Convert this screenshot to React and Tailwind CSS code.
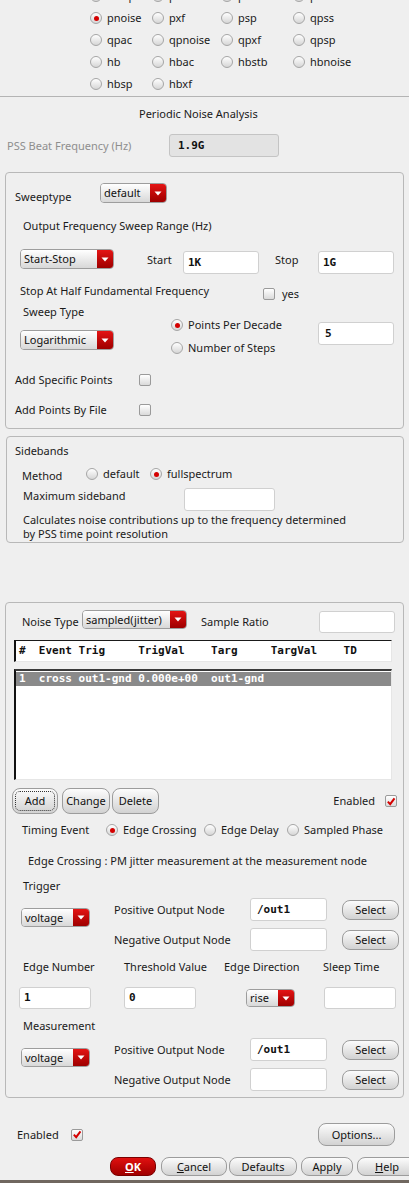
import React from "react";

const Radio = ({ on }) => (
  <span className="flex h-[12px] w-[12px] shrink-0 items-center justify-center rounded-full border border-[#a6a6a6] bg-linear-to-b from-white to-[#d6d6d6]">
    {on && <span className="h-[5px] w-[5px] rounded-full bg-[#d40000]" />}
  </span>
);

const Check = ({ on }) => (
  <span className="flex h-[12px] w-[12px] shrink-0 items-center justify-center rounded-[2px] border border-[#9a9a9a] bg-linear-to-b from-white to-[#dadada]">
    {on && (
      <svg viewBox="0 0 12 12" className="h-[11px] w-[11px]">
        <path d="M2.2 6.2 L5 9.2 L10.2 2.2" stroke="#d40000" strokeWidth="2.4" fill="none" />
      </svg>
    )}
  </span>
);

const Drop = ({ label, className }) => (
  <div className={`flex shrink-0 overflow-hidden rounded-[4px] border border-[#9d9d9d] ${className}`}>
    <div className="flex flex-1 items-center bg-linear-to-b from-white to-[#d8d8d8] pl-[3px] text-[#111]">{label}</div>
    <div className="flex w-[16px] items-center justify-center bg-linear-to-b from-[#e41414] to-[#9e0000]">
      <svg width="8" height="5" viewBox="0 0 8 5">
        <path d="M0.5 0.5h7L4 4.5z" fill="#fff" />
      </svg>
    </div>
  </div>
);

// bg / border / padding come in through `look` so they never clash
const Field = ({ value, className, look = "border-[#d0d0d0] bg-white pl-[5px]" }) => (
  <div
    className={`flex shrink-0 items-center rounded-[3px] border font-['DejaVu_Sans_Mono',monospace] text-[11px] font-bold text-[#111] ${look} ${className}`}
  >
    {value}
  </div>
);

const Btn = ({ children, className }) => (
  <div
    className={`relative flex shrink-0 items-center justify-center rounded-[8px] border border-[#9c9c9c] bg-linear-to-b from-[#fcfcfc] to-[#d2d2d2] text-[#111] ${className}`}
  >
    {children}
  </div>
);

const RadioItem = ({ on, label, className }) => (
  <div className={`flex items-center ${className}`}>
    <Radio on={on} />
    <span className="ml-[5px]">{label}</span>
  </div>
);

const analyses = [
  ["envlp", "pss", "pac", "pstb"],
  ["pnoise", "pxf", "psp", "qpss"],
  ["qpac", "qpnoise", "qpxf", "qpsp"],
  ["hb", "hbac", "hbstb", "hbnoise"],
  ["hbsp", "hbxf"],
];

const colW = ["w-[62px]", "w-[69px]", "w-[72px]", "w-[80px]"];

const WHITE4 = "border-[#d0d0d0] bg-white pl-[4px]";
const WHITE6 = "border-[#d0d0d0] bg-white pl-[6px]";

// trigger / measurement node block
const NodeBlock = ({ pos }) => (
  <div className="flex pl-[15px]">
    <div className="w-[93px] shrink-0 pt-[10px]">
      <Drop label="voltage" className="h-[19px] w-[69px]" />
    </div>
    <div className="flex flex-col gap-[7px]">
      <div className="flex h-[23px] items-center">
        <span className="w-[136px]">Positive Output Node</span>
        <Field value={pos} look={WHITE6} className="h-[23px] w-[77px]" />
        <Btn className="ml-[15px] h-[20px] w-[57px]">Select</Btn>
      </div>
      <div className="flex h-[23px] items-center">
        <span className="w-[136px]">Negative Output Node</span>
        <Field value="" className="h-[23px] w-[77px]" />
        <Btn className="ml-[15px] h-[20px] w-[57px]">Select</Btn>
      </div>
    </div>
  </div>
);

export default function App() {
  return (
    <div className="flex h-[1183px] w-[409px] flex-col overflow-hidden bg-[#efefef] font-['Noto_Sans',sans-serif] text-[11px] leading-[16px] text-[#1a1a1a]">
      {/* analysis radio grid, first row scrolled half out of view */}
      <div className="-mt-[15px] flex flex-col pl-[90px]">
        {analyses.map((row, r) => (
          <div key={r} className="flex h-[22px] items-center">
            {row.map((name, c) => (
              <RadioItem key={name} on={name === "pnoise"} label={name} className={colW[c]} />
            ))}
          </div>
        ))}
      </div>
      <div className="mt-[1px] border-t border-[#b4b4b4]" />

      <div className="mt-[9px] h-[16px] pl-[139px]">Periodic Noise Analysis</div>

      <div className="mt-[12px] flex h-[23px] items-center">
        <span className="w-[169px] pl-[7px] text-[#8e8e8e]">PSS Beat Frequency (Hz)</span>
        <Field value="1.9G" look="border-[#c4c4c4] bg-[#e3e3e3] pl-[8px]" className="h-[23px] w-[110px]" />
      </div>

      {/* sweep box */}
      <div className="ml-[5px] mt-[15px] h-[257px] w-[399px] shrink-0 rounded-[4px] border border-[#b8b8b8]">
        <div className="mt-[10px] flex h-[20px] items-start pl-[9px]">
          <span className="mt-[6px] w-[85px]">Sweeptype</span>
          <Drop label="default" className="h-[20px] w-[67px]" />
        </div>
        <div className="mt-[15px] h-[16px] pl-[17px]">Output Frequency Sweep Range (Hz)</div>
        <div className="mt-[15px] flex h-[25px] items-start pl-[14px]">
          <Drop label="Start-Stop" className="h-[20px] w-[94px]" />
          <span className="ml-[33px] mt-[3px] w-[36px]">Start</span>
          <Field value="1K" look={WHITE4} className="mt-[2px] h-[23px] w-[76px]" />
          <span className="ml-[16px] mt-[3px] w-[43px]">Stop</span>
          <Field value="1G" look={WHITE4} className="mt-[2px] h-[23px] w-[76px]" />
        </div>
        <div className="mt-[9px] flex h-[16px] items-start pl-[14px]">
          <span className="w-[243px]">Stop At Half Fundamental Frequency</span>
          <span className="mt-[5px]">
            <Check />
          </span>
          <span className="ml-[7px] mt-[3px]">yes</span>
        </div>
        <div className="mt-[5px] flex pl-[14px]">
          <div className="w-[94px] shrink-0">
            <div className="h-[16px] pl-[3px]">Sweep Type</div>
            <Drop label="Logarithmic" className="mt-[10px] h-[20px] w-[94px]" />
          </div>
          <div className="ml-[57px] w-[147px] shrink-0">
            <RadioItem on label="Points Per Decade" className="mt-[13px] h-[16px]" />
            <RadioItem label="Number of Steps" className="mt-[7px] h-[16px]" />
          </div>
          <Field value="5" look={WHITE6} className="mt-[18px] h-[23px] w-[76px]" />
        </div>
        <div className="mt-[16px] flex h-[16px] items-center pl-[9px]">
          <span className="w-[124px]">Add Specific Points</span>
          <Check />
        </div>
        <div className="mt-[14px] flex h-[16px] items-center pl-[9px]">
          <span className="w-[124px]">Add Points By File</span>
          <Check />
        </div>
      </div>

      {/* sidebands box */}
      <div className="ml-[6px] mt-[7px] h-[107px] w-[398px] shrink-0 rounded-[4px] border border-[#b8b8b8]">
        <div className="mt-[6px] h-[16px] pl-[8px]">Sidebands</div>
        <div className="mt-[7px] flex h-[16px] items-center pl-[15px]">
          <span className="mt-[3px] w-[64px]">Method</span>
          <RadioItem label="default" className="w-[64px]" />
          <RadioItem on label="fullspectrum" />
        </div>
        <div className="mt-[6px] flex h-[23px] items-start pl-[16px]">
          <span className="w-[161px]">Maximum sideband</span>
          <Field value="" className="h-[23px] w-[91px]" />
        </div>
        <div className="mt-[2px] pl-[16px] leading-[14px]">
          Calculates noise contributions up to the frequency determined
          <br />
          by PSS time point resolution
        </div>
      </div>

      {/* noise box */}
      <div className="ml-[5px] mt-[59px] h-[496px] w-[399px] shrink-0 rounded-[4px] border border-[#b8b8b8]">
        <div className="mt-[7px] flex h-[23px] items-start pl-[16px]">
          <span className="mt-[4px] w-[60px]">Noise Type</span>
          <Drop label="sampled(jitter)" className="h-[19px] w-[105px]" />
          <span className="ml-[14px] mt-[4px] w-[118px]">Sample Ratio</span>
          <Field value="" className="mt-[1px] h-[22px] w-[76px]" />
        </div>

        <div className="ml-[8px] mt-[7px] flex h-[22px] w-[378px] items-center border-t border-l-2 border-r border-b border-t-[#1a1a1a] border-l-[#111] border-r-[#e6e6e6] border-b-[#e6e6e6] bg-white pl-[3px] font-['DejaVu_Sans_Mono',monospace] font-bold whitespace-pre text-[#111]">
          {"#  Event Trig     TrigVal    Targ     TargVal    TD"}
        </div>
        <div className="ml-[8px] mt-[7px] h-[111px] w-[378px] border-t-2 border-l-2 border-r border-b border-t-[#3a3a3a] border-l-[#111] border-r-[#e6e6e6] border-b-[#e6e6e6] bg-white pt-[1px]">
          <div className="flex h-[14px] items-center bg-[#8a8a8a] pl-[3px] font-['DejaVu_Sans_Mono',monospace] font-bold whitespace-pre text-white">
            {"1  cross out1-gnd 0.000e+00  out1-gnd"}
          </div>
        </div>

        <div className="mt-[8px] flex h-[26px] items-center pl-[6px] pr-[6px]">
          <Btn className="h-[26px] w-[46px]">
            <span className="absolute inset-[2px] rounded-[5px] border border-dotted border-[#333]" />
            Add
          </Btn>
          <Btn className="ml-[4px] h-[26px] w-[48px]">Change</Btn>
          <Btn className="ml-[2px] h-[26px] w-[47px]">Delete</Btn>
          <span className="ml-auto mr-[10px]">Enabled</span>
          <Check on />
        </div>

        <div className="mt-[8px] flex h-[16px] items-center pl-[16px]">
          <span className="w-[84px]">Timing Event</span>
          <RadioItem on label="Edge Crossing" className="w-[98px]" />
          <RadioItem label="Edge Delay" className="w-[83px]" />
          <RadioItem label="Sampled Phase" />
        </div>

        <div className="mt-[15px] h-[16px] pl-[22px]">
          Edge Crossing : PM jitter measurement at the measurement node
        </div>
        <div className="mt-[9px] h-[16px] pl-[17px]">Trigger</div>
        <div className="mt-[4px]">
          <NodeBlock pos="/out1" />
        </div>

        <div className="mt-[8px] flex h-[16px] pl-[17px]">
          <span className="w-[101px]">Edge Number</span>
          <span className="w-[100px]">Threshold Value</span>
          <span className="w-[99px]">Edge Direction</span>
          <span>Sleep Time</span>
        </div>
        <div className="mt-[12px] flex h-[22px] items-start pl-[13px]">
          <Field value="1" look={WHITE4} className="h-[22px] w-[72px]" />
          <Field value="0" look={WHITE4} className="ml-[33px] h-[22px] w-[72px]" />
          <Drop label="rise" className="ml-[50px] mt-[2px] h-[18px] w-[49px]" />
          <Field value="" className="ml-[29px] h-[22px] w-[72px]" />
        </div>

        <div className="mt-[9px] h-[16px] pl-[17px]">Measurement</div>
        <div className="mt-[4px]">
          <NodeBlock pos="/out1" />
        </div>
      </div>

      {/* bottom */}
      <div className="mt-[25px] flex h-[23px] items-center pl-[17px] pr-[14px]">
        <span className="w-[54px]">Enabled</span>
        <Check on />
        <Btn className="ml-auto h-[23px] w-[77px]">Options...</Btn>
      </div>
      <div className="mt-[11px] flex h-[19px] pl-[110px]">
        <div className="flex h-[19px] w-[46px] shrink-0 items-center justify-center rounded-[8px] border border-[#7a0000] bg-linear-to-b from-[#e01010] to-[#a00000] font-bold text-white">
          <span className="underline">O</span>K
        </div>
        <Btn className="ml-[5px] h-[19px] w-[66px]">
          <span className="underline">C</span>ancel
        </Btn>
        <Btn className="ml-[2px] h-[19px] w-[68px]">Defaults</Btn>
        <Btn className="ml-[4px] h-[19px] w-[52px]">Apply</Btn>
        <Btn className="ml-[4px] h-[19px] w-[60px]">
          <span className="underline">H</span>elp
        </Btn>
      </div>
      <div className="mt-auto h-[3px] bg-[#70675f]" />
    </div>
  );
}
